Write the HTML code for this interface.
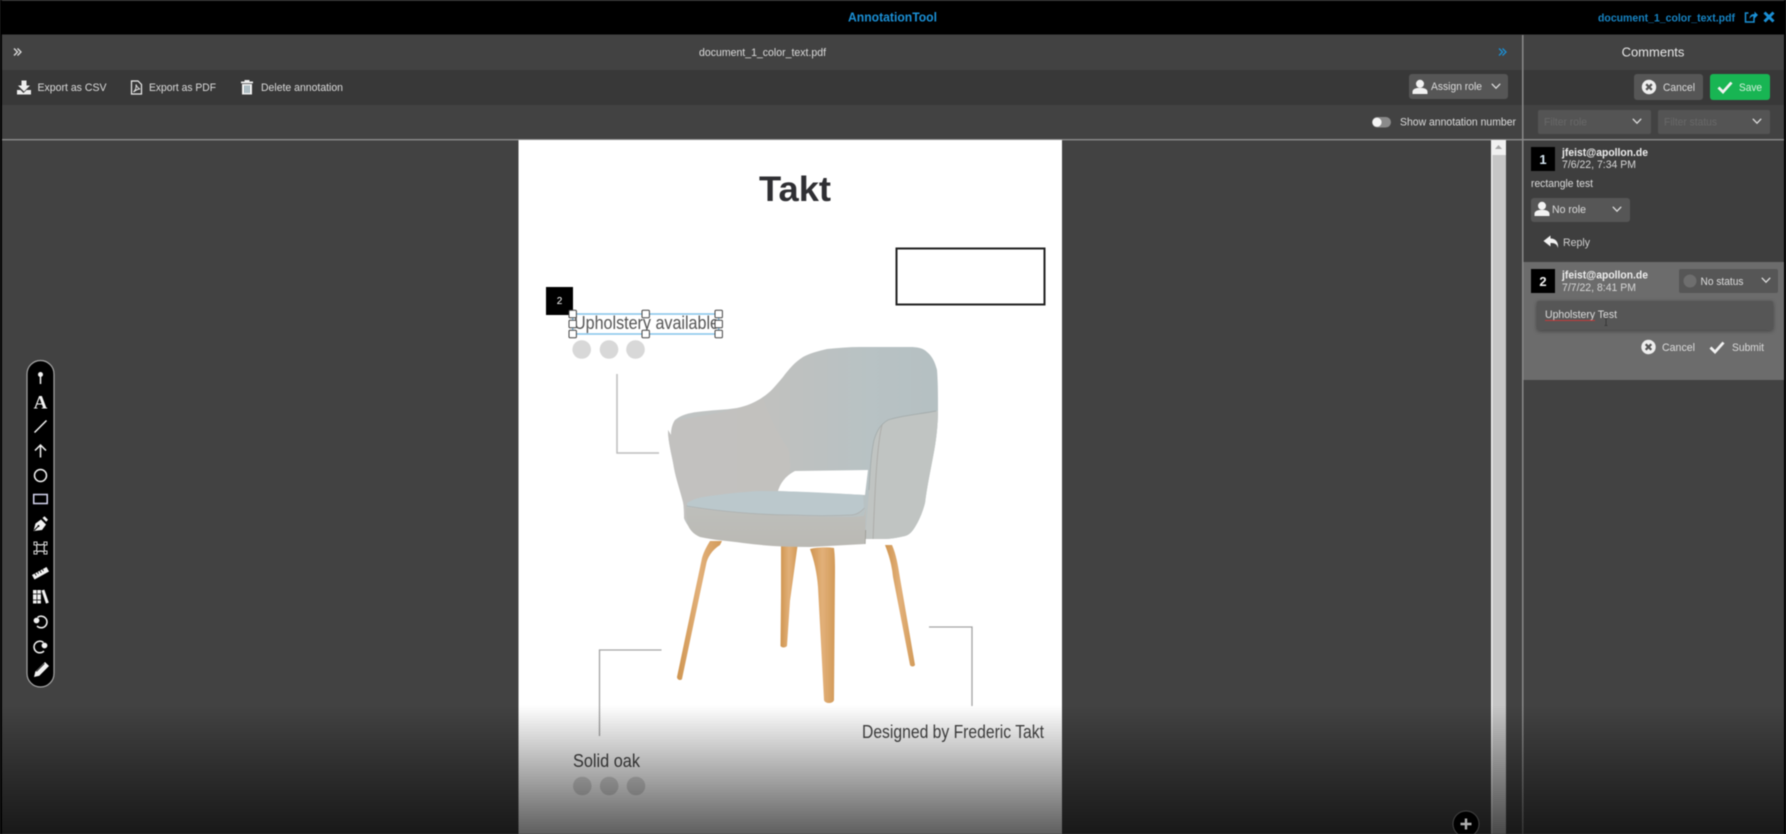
<!DOCTYPE html>
<html lang="en"><head><meta charset="utf-8"><title>AnnotationTool</title>
<style>
html,body{margin:0;padding:0;width:1786px;height:834px;overflow:hidden;background:#424242}
svg{display:block;filter:blur(.45px)}
text{font-family:"Liberation Sans",sans-serif;font-size:11.3px;fill:#dcdcdc}
</style></head><body>
<svg xmlns="http://www.w3.org/2000/svg" width="1786" height="834" viewBox="0 0 1786 834">
<defs>
<linearGradient id="fade" x1="0" y1="0" x2="0" y2="1"><stop offset="0" stop-color="#000" stop-opacity="0"/><stop offset="1" stop-color="#000" stop-opacity=".63"/></linearGradient>
<linearGradient id="back" x1="0" y1="0" x2="1" y2="0"><stop offset="0" stop-color="#bfc4c4"/><stop offset=".4" stop-color="#c0c1bf"/><stop offset=".75" stop-color="#b8c2c4"/><stop offset="1" stop-color="#b5c0c2"/></linearGradient>
<linearGradient id="front" x1="0" y1="0" x2="0" y2="1"><stop offset="0" stop-color="#bebfbb"/><stop offset="1" stop-color="#bab9b4"/></linearGradient>
<linearGradient id="oak" x1="0" y1="0" x2="1" y2="0"><stop offset="0" stop-color="#cf9550"/><stop offset=".5" stop-color="#e2b079"/><stop offset="1" stop-color="#d29a58"/></linearGradient>
<clipPath id="sil"><path d="M671 435c0-7 2-12 4-15 6-5 14-7 22-8 14-2 28-2 40-4 10-2 19-6 26-11 8-5 14-13 20-20 6-8 12-15 20-20 7-4 16-6 24-8 11-1 22-2 33-2 17 0 34 0 50 0 7 0 13 1 17 5 5 4 8 10 10 18 1 12 1 28 1 40 0 16-2 32-5 47-3 16-6 30-8 46-2 8-6 18-10 24-3 5-6 8-10 9-8 2-16 3-22 3-8 0-13 0-21 0-18 1-36 3-55 3-22 0-45-1-67-4-14-2-30-3-43-6-7-3-11-8-13-14 0-5 0-11-1-16-3-12-7-23-9-34-2-13-6-25-6-38z"/></clipPath>
<g id="user"><circle cx="0" cy="-3.200" r="4"/><path d="M-7.500 7v-2.200c0-2.600 3.200-4 7.500-4s7.500 1.400 7.500 4V7z"/></g>
<g id="xc"><circle r="7.200" fill="#eee"/><path d="M-2.800-2.800l5.600 5.600M2.800-2.800l-5.600 5.600" stroke="#555" stroke-width="2.200" fill="none"/></g>
<path id="chev" d="M-4.200-2.200L0 2.200 4.200-2.200" fill="none" stroke="#ddd" stroke-width="1.300"/>
<path id="chk" d="M-6.500 .5L-2 5 6.500-4.500" fill="none" stroke="#f2f2f2" stroke-width="2.800"/>
<rect id="h" x="-3.700" y="-3.700" width="7.400" height="7.400" rx="1" fill="#fff" stroke="#444" stroke-width="1"/>
</defs>

<!-- base -->
<rect width="1786" height="834" fill="#424242"/>
<rect width="1786" height="34.500" fill="#000"/>
<rect width="1786" height="1" fill="#333"/>
<rect y="70" width="1786" height="35" fill="#383838"/>
<rect x="0" y="0" width="2" height="834" fill="#000"/>
<rect x="1784" y="0" width="2" height="834" fill="#000"/>
<rect x="2" y="139" width="1782" height="1.400" fill="#8a8a8a"/>

<!-- top bar -->
<text x="848" y="21.500" textLength="89" lengthAdjust="spacingAndGlyphs" style="font-size:12.500px;font-weight:bold;fill:#1b8fd4">AnnotationTool</text>
<text x="1598" y="21.500" textLength="137" lengthAdjust="spacingAndGlyphs" style="font-weight:bold;fill:#1783c2">document_1_color_text.pdf</text>
<g fill="none" stroke="#1b8fd4" stroke-width="1.500"><path d="M1754 15v7h-8.500v-9h3"/><path d="M1749.500 19c0-3.500 2-5 5-5V11.500l3.500 3.500-3.500 3.500v-2.500c-2 0-3.800.7-5 3z" fill="#1b8fd4" stroke="none"/></g>
<path d="M1764.500 12.500l9 9M1773.500 12.500l-9 9" stroke="#1b8fd4" stroke-width="3" fill="none"/>

<!-- row 1 -->
<path d="M14 48.500l3.500 3.500-3.500 3.500M17.500 48.500l3.500 3.500-3.500 3.500" fill="none" stroke="#ddd" stroke-width="1.300"/>
<text x="699" y="56" textLength="127" lengthAdjust="spacingAndGlyphs">document_1_color_text.pdf</text>
<path d="M1499 48.500l3.500 3.500-3.500 3.500M1502.500 48.500l3.500 3.500-3.500 3.500" fill="none" stroke="#1b8fd4" stroke-width="1.300"/>
<text x="1653" y="56.500" text-anchor="middle" style="font-size:13px;fill:#e8e8e8">Comments</text>

<!-- row 2 left -->
<g fill="#eee"><path d="M21.500 80.500h5v5h3.500l-6 6-6-6h3.500z"/><path d="M17 90h3.500l3 3 3-3H31v4.500H17z"/></g>
<text x="37.500" y="91" textLength="69" lengthAdjust="spacingAndGlyphs">Export as CSV</text>
<g fill="none" stroke="#eee" stroke-width="1.200"><path d="M131.500 81h6.500l3.500 3.500V94h-10z"/><path d="M133.500 92c2-2 3-5 2.500-7.500 1 2.500 2.500 4 4 4.500-2 0-4 .8-6.500 3z" stroke-width=".9"/></g>
<text x="149" y="91" textLength="67" lengthAdjust="spacingAndGlyphs">Export as PDF</text>
<g fill="#eee"><rect x="241" y="81.500" width="12" height="1.800"/><rect x="244.500" y="80" width="5" height="2"/><path d="M242 84h10v10.500h-10z"/></g><path d="M245 85.500v7.500M247 85.500v7.500M249 85.500v7.500" stroke="#6d8c98" stroke-width="1"/>
<text x="261" y="91" textLength="82" lengthAdjust="spacingAndGlyphs">Delete annotation</text>

<!-- assign role -->
<rect x="1409" y="74" width="99" height="25" rx="3" fill="#565656"/>
<use href="#user" x="1420" y="87" fill="#f2f2f2"/>
<text x="1431" y="90" textLength="51" lengthAdjust="spacingAndGlyphs">Assign role</text>
<use href="#chev" x="1496" y="86"/>

<!-- cancel / save -->
<rect x="1634" y="74" width="69" height="26" rx="3" fill="#565656"/>
<use href="#xc" x="1649" y="87"/>
<text x="1663" y="91" textLength="32" lengthAdjust="spacingAndGlyphs">Cancel</text>
<rect x="1710" y="74" width="60" height="26" rx="3" fill="#18b553"/>
<use href="#chk" x="1725" y="87"/>
<text x="1739" y="91" textLength="23" lengthAdjust="spacingAndGlyphs" style="fill:#d4f0dd">Save</text>

<!-- filters -->
<rect x="1538" y="110" width="113" height="24" rx="2" fill="#545454"/>
<text x="1544" y="125.500" textLength="43" lengthAdjust="spacingAndGlyphs" style="fill:#686868">Filter role</text>
<use href="#chev" x="1637" y="121"/>
<rect x="1658" y="110" width="112" height="24" rx="2" fill="#545454"/>
<text x="1664" y="125.500" textLength="53" lengthAdjust="spacingAndGlyphs" style="fill:#686868">Filter status</text>
<use href="#chev" x="1757" y="121"/>

<!-- toggle -->
<rect x="1372" y="117" width="19" height="10.500" rx="5.200" fill="#8a8a8a"/>
<circle cx="1377" cy="122.200" r="4.600" fill="#f4f4f4"/>
<text x="1400" y="125.500" textLength="116" lengthAdjust="spacingAndGlyphs">Show annotation number</text>

<!-- PDF page -->
<rect x="518.500" y="140" width="543.500" height="694" fill="#fff"/>
<text x="759" y="201" textLength="72" lengthAdjust="spacingAndGlyphs" style="font-size:35px;font-weight:bold;fill:#2f2f33">Takt</text>
<rect x="896.500" y="248.500" width="148" height="56" fill="none" stroke="#222" stroke-width="2"/>

<!-- brackets -->
<path d="M617 374v79h42" fill="none" stroke="#bdbdbd" stroke-width="1.500"/>
<path d="M661.500 650h-62v86" fill="none" stroke="#a3a3a3" stroke-width="1.300"/>
<path d="M929 627h43v79" fill="none" stroke="#a3a3a3" stroke-width="1.300"/>

<!-- circles -->
<g fill="#d8d8d8"><circle cx="581.700" cy="349.500" r="9.300"/><circle cx="609" cy="349.500" r="9.300"/><circle cx="635.500" cy="349.500" r="9.300"/><circle cx="582.300" cy="786" r="9.300"/><circle cx="609.200" cy="786" r="9.300"/><circle cx="636" cy="786" r="9.300"/></g>

<!-- chair legs -->
<g fill="url(#oak)">
<path d="M722 541h-12c-3 5-6 10-8 17L677 677c0 3 4 4 5 2l24-114c1-7 6-15 14-20z"/>
<path d="M781 546h16.500l-7.500 55-3 45c-2 2-5 2-6.500 0l.5-50z"/>
<path d="M810 549c7-2 18-2 24-1 1 8 1 16 1 24l-1 128c-1 4-9 4-10 0l-6-113c-1-14-4-27-8-38z"/>
<path d="M885 545h7c4 9 6 20 8 33l15 87c-1 2-4 2-5 0l-17-88c-1-11-4-22-8-32z"/>
</g>

<!-- chair body -->
<path d="M671 435c0-7 2-12 4-15 6-5 14-7 22-8 14-2 28-2 40-4 10-2 19-6 26-11 8-5 14-13 20-20 6-8 12-15 20-20 7-4 16-6 24-8 11-1 22-2 33-2 17 0 34 0 50 0 7 0 13 1 17 5 5 4 8 10 10 18 1 12 1 28 1 40 0 16-2 32-5 47-3 16-6 30-8 46-2 8-6 18-10 24-3 5-6 8-10 9-8 2-16 3-22 3-8 0-13 0-21 0-18 1-36 3-55 3-22 0-45-1-67-4-14-2-30-3-43-6-7-3-11-8-13-14 0-5 0-11-1-16-3-12-7-23-9-34-2-13-6-25-6-38z" fill="url(#back)"/>
<g clip-path="url(#sil)">
<path d="M660 424c30-8 77-10 103-26 5 14 14 36 25 50 3 10 2 24 1 34l-4 8-87 30-40 0z" fill="#c3c1bd" opacity=".7"/>
<path d="M864 550c2-24 4-42 5-60 1-18 2-36 5-50 3-10 7-16 14-20 10-4 32-6 48-9l10 0-10 150z" fill="#c0c4c2"/>
<path d="M869 490c1-18 2-36 5-50 3-10 7-16 14-20 10-4 32-6 48-9" fill="none" stroke="#a5adad" stroke-width=".9"/>
<path d="M882 425c-5 20-7 62-9 116" fill="none" stroke="#adadaa" stroke-width="1"/>
</g>
<path d="M865 544l.5-14" fill="none" stroke="#8f8d85" stroke-width="1"/>
<!-- opening -->
<path d="M795 471l73-1-3 25-87-4c2-7 7-15 17-20z" fill="#fff"/>
<!-- seat -->
<path d="M686 507c0 8 1 15 1 16 2 6 6 11 13 14 13 3 29 4 43 6 22 3 45 4 67 4l55-3 1-36-2 8c-4 0-8 1-14 1-50 0-120-3-164-10z" fill="url(#front)"/>
<path d="M687 503c5-3 10-5 16-6 20-3 38-5 57-6 35 0 70 2 103 4l1 13c-4 4-8 7-14 7-20 1-38 1-57 0-22 0-44-2-66-4-14-1-27-3-40-4z" fill="#bbc8cc"/>
<path d="M686.500 506c30 5 70 9 107 9 20 1 38 1 57 0 6 0 10-3 14-7" fill="none" stroke="#acb0af" stroke-width=".8"/>

<!-- annotation text -->
<text x="574" y="329" textLength="145" lengthAdjust="spacingAndGlyphs" style="font-size:18.500px;fill:#555">Upholstery available</text>
<text x="862" y="738" textLength="182" lengthAdjust="spacingAndGlyphs" style="font-size:18px;fill:#444">Designed by Frederic Takt</text>
<text x="573" y="767" textLength="67" lengthAdjust="spacingAndGlyphs" style="font-size:18px;fill:#444">Solid oak</text>

<!-- selection -->
<rect x="546" y="287" width="27" height="28" fill="#000"/>
<text x="559.500" y="304" text-anchor="middle" style="font-size:10px;fill:#fff">2</text>
<rect x="572.700" y="314" width="146" height="20" fill="none" stroke="#84c3ea" stroke-width="1.500"/>
<use href="#h" x="572.700" y="314"/><use href="#h" x="645.700" y="314"/><use href="#h" x="718.700" y="314"/>
<use href="#h" x="572.700" y="324"/><use href="#h" x="718.700" y="324"/>
<use href="#h" x="572.700" y="334"/><use href="#h" x="645.700" y="334"/><use href="#h" x="718.700" y="334"/>

<!-- scrollbar -->
<rect x="1491" y="140" width="15" height="694" fill="#c6c6c6"/>
<rect x="1491" y="140" width="15" height="15" fill="#f1f1f1"/>
<path d="M1495 149l3.500-4 3.500 4z" fill="#a5a5a5"/>
<rect x="1491" y="155" width="1.500" height="679" fill="#f0f0f0"/>
<rect x="1522" y="35" width="1.500" height="799" fill="#8a8a8a"/>

<!-- comments -->
<rect x="1523.500" y="140.500" width="260.500" height="121.500" fill="#3e3e3e"/>
<rect x="1531" y="147" width="24" height="24" fill="#000"/>
<text x="1543" y="164" text-anchor="middle" style="font-size:13px;font-weight:bold;fill:#d6e6f2">1</text>
<text x="1562" y="156" textLength="86" lengthAdjust="spacingAndGlyphs" style="font-weight:bold;fill:#eee">jfeist@apollon.de</text>
<text x="1562" y="168" textLength="74" lengthAdjust="spacingAndGlyphs" style="fill:#d6d6d6">7/6/22, 7:34 PM</text>
<text x="1531" y="187" textLength="62" lengthAdjust="spacingAndGlyphs">rectangle test</text>
<rect x="1531" y="198" width="99" height="24" rx="3" fill="#565656"/>
<use href="#user" x="1542" y="209" fill="#f2f2f2"/>
<text x="1552" y="213" textLength="34" lengthAdjust="spacingAndGlyphs">No role</text>
<use href="#chev" x="1617" y="209"/>
<path d="M1550.500 235.500l-7 5.500 7 5.500V243c4-.2 6.500 1 7.500 5 .7-6-2.500-9.500-7.500-9.500z" fill="#f2f2f2"/>
<text x="1563" y="246" textLength="27" lengthAdjust="spacingAndGlyphs" style="fill:#cfcfcf">Reply</text>

<rect x="1523.500" y="262" width="260.500" height="118" fill="#6c6c6c"/>
<rect x="1531" y="269" width="24" height="24" fill="#000"/>
<text x="1543" y="286" text-anchor="middle" style="font-size:13px;font-weight:bold;fill:#eee">2</text>
<text x="1562" y="278.500" textLength="86" lengthAdjust="spacingAndGlyphs" style="font-weight:bold;fill:#eee">jfeist@apollon.de</text>
<text x="1562" y="291" textLength="74" lengthAdjust="spacingAndGlyphs" style="fill:#d6d6d6">7/7/22, 8:41 PM</text>
<rect x="1679" y="269" width="99" height="24" rx="2" fill="#565656"/>
<circle cx="1690" cy="281" r="6.500" fill="#6e6e6e"/>
<text x="1700.500" y="285" textLength="43" lengthAdjust="spacingAndGlyphs">No status</text>
<use href="#chev" x="1766" y="280"/>
<rect x="1537" y="301" width="236" height="29" rx="2" fill="#565656" style="filter:drop-shadow(0 1px 2px rgba(0,0,0,.4))"/>
<text x="1545" y="318" textLength="72" lengthAdjust="spacingAndGlyphs">Upholstery Test</text>
<path d="M1545 320.500h50" stroke="#c23a3a" stroke-width="1"/>
<path d="M1606 319v6M1604.500 318.500h3M1604.500 325.500h3" stroke="#333" stroke-width=".8"/>
<use href="#xc" x="1648.500" y="347"/>
<text x="1662" y="351" textLength="33" lengthAdjust="spacingAndGlyphs">Cancel</text>
<use href="#chk" x="1717" y="347"/>
<text x="1732" y="351" textLength="32" lengthAdjust="spacingAndGlyphs">Submit</text>

<!-- bottom video fade -->
<rect x="0" y="705" width="1786" height="129" fill="url(#fade)"/>

<!-- plus -->
<circle cx="1466" cy="824" r="13" fill="#000" stroke="#444" stroke-width="1"/>
<path d="M1466 818.500v11M1460.500 824h11" stroke="#b0b0b0" stroke-width="2.400"/>

<!-- floating tool palette -->
<rect x="27" y="360.500" width="27" height="326.500" rx="13.500" fill="#000" stroke="#a5a5a5" stroke-width="1.200"/>
<g fill="none" stroke="#f2f2f2" stroke-width="1.500">
<path d="M40.500 376v8"/>
<circle cx="40.500" cy="374.500" r="2.500" fill="#f2f2f2" stroke="none"/>
<path d="M34.500 432.500l12-12"/>
<path d="M40.500 457.500v-12.500M35 450.500l5.500-5.500 5.500 5.500"/>
<circle cx="40.500" cy="475.500" r="6"/>
<rect x="33.700" y="494.500" width="13.500" height="9" stroke="#d6d6f0"/>
</g>
<text x="40.500" y="408.500" text-anchor="middle" style="font-family:'Liberation Serif',serif;font-size:19px;font-weight:bold;fill:#f2f2f2">A</text>
<!-- pen nib -->
<path d="M33.500 531l2-7.500 5.500-4 5 5-4 5.500z" fill="#f2f2f2"/>
<path d="M34 530.500l4-4" stroke="#000" stroke-width="1" fill="none"/><circle cx="38.500" cy="526" r="1" fill="#000"/>
<path d="M42.500 518l2-1.800 3.500 3.500-1.800 2z" fill="#f2f2f2"/>
<!-- bezier square -->
<path d="M36 544q4.500 1.800 9 0q-1.800 4 0 8q-4.500-1.800-9 0q1.800-4 0-8z" fill="none" stroke="#ededed" stroke-width="1.100"/>
<g fill="#000" stroke="#cfcfcf" stroke-width="1"><rect x="34" y="542" width="3" height="3"/><rect x="44" y="542" width="3" height="3"/><rect x="34" y="551" width="3" height="3"/><rect x="44" y="551" width="3" height="3"/></g>
<!-- ruler -->
<path d="M32 575l14.500-8 2.500 4.500-14.500 8z" fill="#f2f2f2"/>
<path d="M35 573.500l1.300 2.200M37.500 572l1 1.800M40 570.700l1.300 2.200M42.500 569.300l1 1.800" stroke="#000" stroke-width=".8" fill="none"/>
<!-- books -->
<g fill="#f2f2f2"><rect x="33" y="590" width="3.600" height="13.500"/><rect x="37.300" y="590" width="3.600" height="13.500"/><path d="M41.500 590.500l2.800-.9 4.500 13-2.800 1z"/></g>
<path d="M33 594h3.600M37.300 594h3.600M33 600h8" stroke="#000" stroke-width=".7" fill="none"/>
<!-- undo / redo -->
<g fill="none" stroke="#f2f2f2" stroke-width="1.500"><path d="M37.500 617.500a5.800 5.800 0 1 1-.5 8.500"/><path d="M43.500 642.500a5.800 5.800 0 1 0 .5 8.500"/></g>
<g fill="#f2f2f2"><circle cx="36.500" cy="620.500" r="2.900"/><circle cx="44.500" cy="645.500" r="2.900"/></g>
<!-- pencil -->
<path d="M34 677l1.300-5.300 9.700-9.700 4 4-9.700 9.700z" fill="#f2f2f2"/>
<path d="M36.500 671.500l8-8" stroke="#000" stroke-width=".7" fill="none"/>
</svg>
</body></html>
